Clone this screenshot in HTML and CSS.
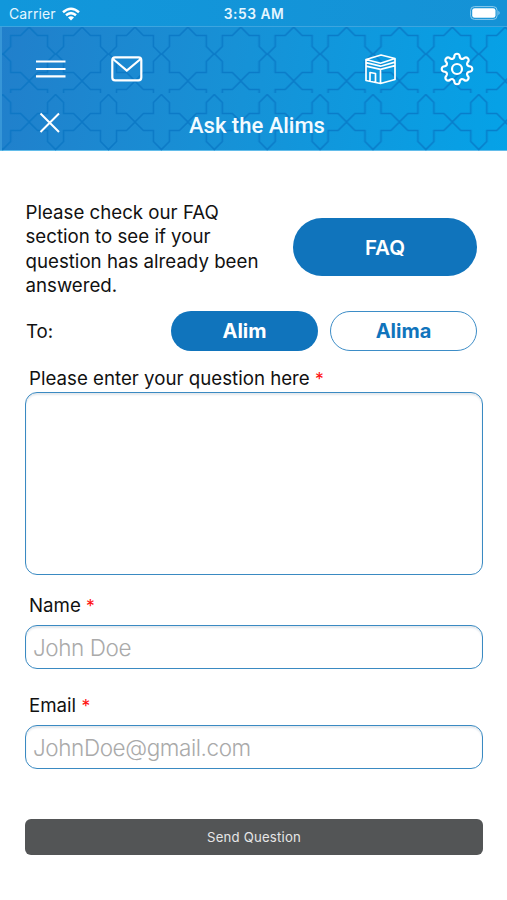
FILE: index.html
```html
<!DOCTYPE html>
<html lang="en">
<head>
<meta charset="utf-8">
<title>Ask the Alims</title>
<link rel="stylesheet" href="styles.css">
</head>
<body>
<div class="status">
  <div class="carrier"><span>Carrier</span>
    <svg width="18" height="14" viewBox="0 0 18 14" fill="none" stroke="#fff" stroke-width="2.5"><path d="M1 5.2Q9-1.8 17 5.2M4 8.3Q9 4 14 8.3"/><path d="M9 13.4L6 10.5Q9 8.2 12 10.5Z" fill="#fff" stroke="none"/></svg>
  </div>
  <span class="time">3:53 AM</span>
  <svg class="battery" width="31" height="14" viewBox="0 0 31 14"><rect x=".6" y=".6" width="26.5" height="12.8" rx="3.8" fill="none" stroke="#8ccbed"/><rect x="2.2" y="2.2" width="23.3" height="9.6" rx="2.4" fill="#fff"/><path d="M28.4 4.8Q31 7 28.4 9.2Z" fill="#8ccbed"/></svg>
</div>
<header class="header">
  <svg class="lattice" width="507" height="125" viewBox="0 26 507 125">
    <defs>
      <path id="cross" d="M0-27.5L8-19.5V-8.5H18L26.45 0L18 8.5H8V19.5L0 27.5L-8 19.5V8.5H-18L-26.45 0L-18-8.5H-8V-19.5Z"/>
      <pattern id="upper" x="29.15" y="0" width="52.9" height="54" patternUnits="userSpaceOnUse"><use href="#cross" x="26.45" y="27"/></pattern>
      <pattern id="lower" x="29.15" y="94" width="52.9" height="57" patternUnits="userSpaceOnUse"><use href="#cross" x="26.45" y="28"/></pattern>
    </defs>
    <g class="lattice-lines"><rect x="2" y="27" width="505" height="66" fill="url(#upper)"/><rect x="2" y="94" width="505" height="57" fill="url(#lower)"/></g>
  </svg>
  <nav class="icons">
    <svg width="30" height="20" viewBox="0 0 30 20" stroke="#fff" stroke-width="2.2"><path d="M0 2.5H29.5M0 10H29.5M0 17.3H29.5"/></svg>
    <svg class="mail" width="32" height="26" viewBox="0 0 32 26" fill="none" stroke="#fff" stroke-width="2.2"><rect x="1.3" y="1.3" width="29" height="23" rx="2.8"/><path d="M2 3L15.8 14.5L29.6 3"/></svg>
    <svg class="kaaba" width="31" height="31" viewBox="0 0 31 31" fill="none" stroke="#fff" stroke-width="1.7" stroke-linejoin="round"><path d="M1 5.5L16 1L30 4.5V25.5L15.5 29.5L1 26.5ZM1 5.5L15.5 9.3L30 4.5M15.5 14.5V29.5M1 8.7L15.5 12.2L30 8.1M1 12.1L15.5 15.4L30 11.6M5 27V18.5L10.5 19.5V28"/></svg>
    <svg width="34" height="34" viewBox="-17 -17 34 34" fill="none" stroke="#fff" stroke-width="2.2" stroke-linejoin="round"><circle r="5"/><path id="gear" d=""/></svg>
  </nav>
  <div class="titlebar">
    <svg width="22" height="22" viewBox="0 0 22 22" stroke="#fff" stroke-width="2"><path d="M1.5 1.5L20 20M20 1.5L1.5 20"/></svg>
    <h1>Ask the Alims</h1>
  </div>
</header>
<main>
  <section class="faq"><p>Please check our FAQ<br>section to see if your<br>question has already been<br>answered.</p><button class="pill big">FAQ</button></section>
  <section class="to"><span class="tolabel">To:</span><button class="pill">Alim</button><button class="pill outline">Alima</button></section>
  <label class="q" for="question"><span>Please enter your question here</span> <i>*</i></label>
  <textarea id="question"></textarea>
  <label class="n" for="name"><span>Name</span> <i>*</i></label>
  <input id="name" placeholder="John Doe">
  <label class="e" for="email"><span>Email</span> <i>*</i></label>
  <input id="email" placeholder="JohnDoe@gmail.com">
  <button class="send">Send Question</button>
</main>
<script src="gear.js"></script>
</body>
</html>
```
FILE: gear.js
```js
// Eight rounded teeth joined by concave valleys.
var parts = [];
for (var i = 0; i < 8; i++) {
  var a = i * Math.PI / 4 - Math.PI / 2;
  var pt = function (r, d) {
    return (r * Math.cos(a + d)).toFixed(2) + ' ' + (r * Math.sin(a + d)).toFixed(2);
  };
  parts.push((i ? 'L' : 'M') + pt(12.4, -0.22) + 'C' + pt(16.6, -0.19) + ' ' + pt(16.6, 0.19) + ' ' + pt(12.4, 0.22) +
    'Q' + pt(9.8, 0.393) + ' ' + pt(12.4, 0.565));
}
document.getElementById('gear').setAttribute('d', parts.join('') + 'Z');
```
FILE: styles.css
```css
* { box-sizing: border-box; }
body { margin: 0; width: 507px; height: 900px; background: #fff; font-family: Inter, "Liberation Sans", sans-serif; color: #111; overflow: hidden; }
.status { height: 26px; background: linear-gradient(90deg, #1197db, #1592d6); display: grid; grid-template-columns: 1fr auto 1fr; align-items: center; padding: 1px 6px 0 9px; color: #e5f6ff; font-size: 14px; }
.carrier { display: flex; align-items: center; gap: 6px; letter-spacing: .1px; }
.time { font-weight: 600; font-size: 13.8px; letter-spacing: .5px; margin-right: 2px; }
.battery { justify-self: end; margin-top: -2px; }
.header { position: relative; height: 125px; background: linear-gradient(100deg, #217fcb, #1791d6 45%, #05a2e7); border-top: 1px solid #3da5df; border-bottom: 1px solid #62bcea; }
.header::before { content: ""; position: absolute; left: 0; top: 0; width: 2px; height: 123px; background: #3796d7; }
.lattice { position: absolute; left: 0; top: -1px; }
.lattice-lines { opacity: .75; }
#cross { fill: none; stroke: #0874c3; stroke-width: 1.6; }
.icons { position: relative; display: flex; align-items: center; height: 85px; padding: 0 0 1px 36px; }
.mail { margin-left: 45px; }
.kaaba { margin-left: 222px; margin-right: 44px; }
.titlebar { position: relative; display: grid; grid-template-columns: 150px auto 1fr; padding-left: 39px; }
h1 { margin: 1px 0 0; font: 500 22px/26px Roboto, sans-serif; color: #f3fbff; }
main { padding: 49px 24px 0 25px; display: flex; flex-direction: column; }
.faq { display: flex; justify-content: space-between; height: 98px; }
.faq p { margin: 0; padding: 1px 0 0 .5px; font-size: 18.7px; line-height: 24.4px; white-space: nowrap; }
button { border: 0; padding: 0; font-family: inherit; }
.pill { width: 147px; height: 40px; border-radius: 30px; background: #1074bc; color: #fff; font-weight: 700; font-size: 20px; }
.big { width: 184px; height: 58px; margin: 18px 6px 0 0; padding-top: 1px; font-size: 20.5px; font-weight: 600; }
.to { display: flex; align-items: center; margin-top: 13px; height: 40px; gap: 12px; font-size: 18.7px; }
.tolabel { width: 134px; padding-left: 1px; }
.outline { background: #fff; border: 1px solid #3d8dc7; color: #1074bc; }
label { margin-left: 4px; font-size: 18.7px; line-height: 24px; }
label i { color: #f11; font-style: normal; font-size: 17.5px; }
.q { margin-top: 16px; }
textarea, input { display: block; width: 458px; border: 1.5px solid #3a8ac2; border-radius: 12px; background: #fff; outline: 0; resize: none; font-family: inherit; box-shadow: inset 0 2px 2px #e4e8ec; }
textarea { height: 183px; margin-top: 1px; }
input { height: 44px; padding: 0 7px; margin-top: 7px; font-size: 22.5px; font-weight: 300; letter-spacing: -.42px; }
input::placeholder { color: #aaa; opacity: 1; }
.n { margin-top: 19px; }
.e { margin-top: 25px; }
.send { margin-top: 50px; width: 458px; height: 36px; border-radius: 6px; background: #535556; color: #e6e6e6; font-size: 13.2px; letter-spacing: .2px; }
```
